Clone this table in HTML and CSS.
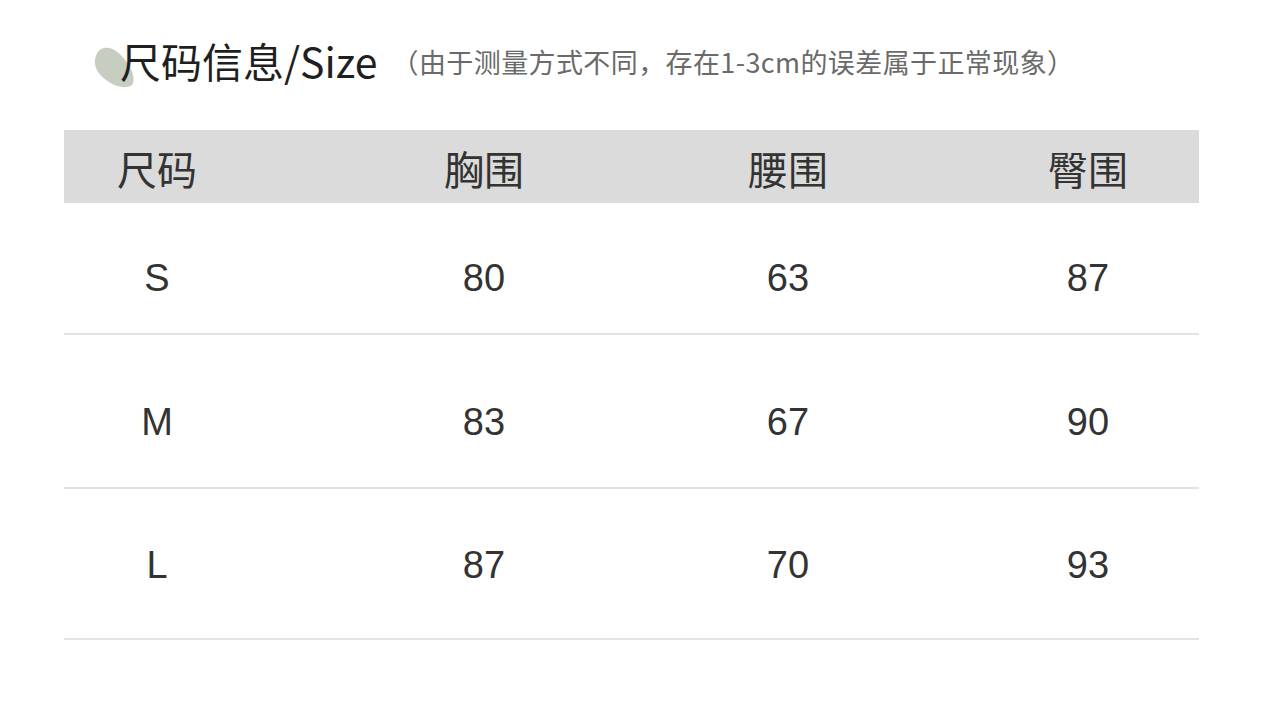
FILE: index.html
```html
<!DOCTYPE html>
<html lang="zh">
<head>
<meta charset="utf-8">
<title>尺码信息</title>
<link rel="stylesheet" href="styles.css">
</head>
<body>
<div class="page">
  <div class="title-row">
    <svg class="blob" width="44" height="42" viewBox="0 0 44 42" aria-hidden="true">
      <path d="M10 1 C18 -1 26 6 32 14 C38 22 42 32 38 38 C33 42 22 40 15 35 C6 29 0 22 1 13 C2 6 5 2 10 1 Z" fill="#c6cec2"/>
    </svg>
    <h1 class="title">尺码信息/Size</h1>
    <span class="note">（由于测量方式不同，存在1-3cm的误差属于正常现象）</span>
  </div>
  <div class="table">
    <div class="row head">
      <div class="cell c1">尺码</div>
      <div class="cell c2">胸围</div>
      <div class="cell c3">腰围</div>
      <div class="cell c4">臀围</div>
    </div>
    <div class="row r1">
      <div class="cell c1">S</div>
      <div class="cell c2">80</div>
      <div class="cell c3">63</div>
      <div class="cell c4">87</div>
    </div>
    <div class="row r2">
      <div class="cell c1">M</div>
      <div class="cell c2">83</div>
      <div class="cell c3">67</div>
      <div class="cell c4">90</div>
    </div>
    <div class="row r3">
      <div class="cell c1">L</div>
      <div class="cell c2">87</div>
      <div class="cell c3">70</div>
      <div class="cell c4">93</div>
    </div>
  </div>
</div>
</body>
</html>
```

FILE: styles.css
```css
html, body {
  margin: 0;
  padding: 0;
  background: #ffffff;
}

.page {
  width: 1280px;
  height: 701px;
  overflow: hidden;
  font-family: "Noto Sans CJK SC", "Noto Sans", sans-serif;
  color: #2a2a2a;
}

.title-row {
  position: relative;
  display: flex;
  align-items: center;
  height: 48px;
  margin-top: 36px;
  padding-left: 120px;
}

.blob {
  position: absolute;
  left: 94px;
  top: 11px;
}

.title {
  position: relative;
  margin: 0;
  font-size: 41px;
  font-weight: 400;
  line-height: 48px;
  color: #1f1f1f;
}

.note {
  position: relative;
  margin-left: 14px;
  margin-top: 4px;
  font-size: 27px;
  line-height: 30px;
  color: #6a6a6a;
  letter-spacing: 0.4px;
}

.table {
  margin-top: 46px;
  margin-left: 64px;
  width: 1135px;
}

.row {
  display: grid;
  grid-template-columns: 43px 100px 227px 100px 204px 100px 200px 100px;
  align-items: start;
  box-sizing: border-box;
}

.cell {
  text-align: center;
  color: #333333;
  white-space: nowrap;
}

.c1 { grid-column: 2; }
.c2 { grid-column: 4; }
.c3 { grid-column: 6; }
.c4 { grid-column: 8; }

.head {
  height: 73px;
  background: #dbdbdb;
  padding-top: 12px;
}

.head .cell {
  font-family: "Noto Sans CJK SC", sans-serif;
  font-size: 40px;
  line-height: 52px;
}

.r1, .r2, .r3 {
  border-bottom: 2px solid #e3e3e3;
}

.r1 .cell, .r2 .cell, .r3 .cell {
  font-family: "Liberation Sans", Arial, sans-serif;
  font-size: 38px;
  line-height: 44px;
}

.r1 { height: 132px; padding-top: 53px; }
.r2 { height: 154px; padding-top: 65px; }
.r3 { height: 151px; padding-top: 54px; }
```
